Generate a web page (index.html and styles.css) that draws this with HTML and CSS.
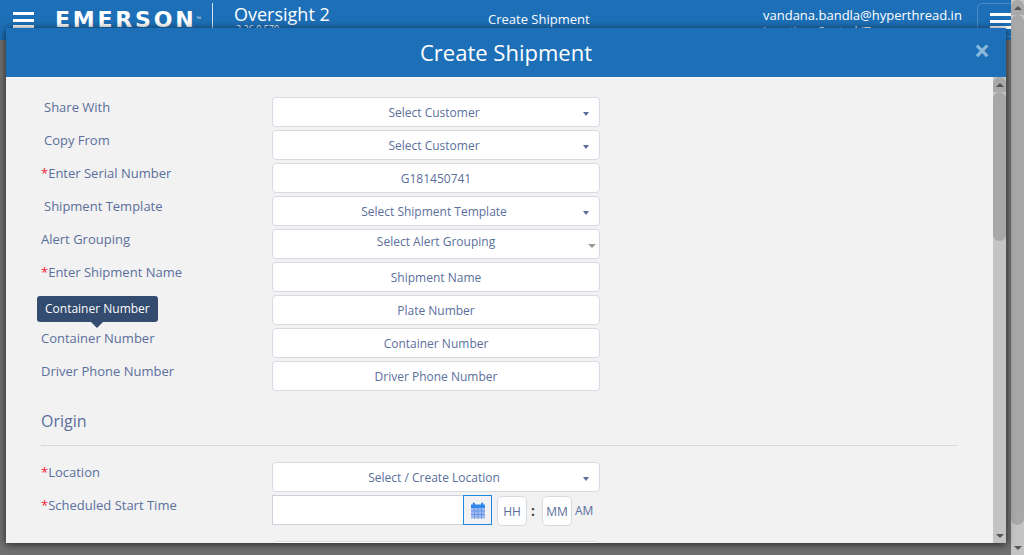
FILE: index.html
```html
<!DOCTYPE html>
<html lang="en">
<head>
  <meta charset="UTF-8">
  <title>Create Shipment</title>
  <link rel="stylesheet" href="styles.css">
</head>
<body>

  <header class="topbar">
    <div class="burger"><span></span><span></span><span></span></div>
    <div class="logo">EMERSON<sup>TM</sup></div>
    <div class="app-name">
      <div class="app-title">Oversight 2</div>
      <div class="app-version">2.26.0.570</div>
    </div>
    <div class="page-title">Create Shipment</div>
    <div class="user">
      <div class="user-mail">vandana.bandla@hyperthread.in</div>
      <div class="user-role">Location: Central IT</div>
    </div>
    <div class="burger-box"><div class="burger"><span></span><span></span><span></span></div></div>
  </header>

  <div class="backdrop"></div>

  <div class="page-scroll">
    <div class="sb-btn sb-up"></div>
    <div class="sb-track"><div class="sb-thumb page-thumb"></div></div>
    <div class="sb-btn sb-down"></div>
  </div>

  <div class="modal">
    <div class="modal-head">
      <h1>Create Shipment</h1>
      <span class="close">&times;</span>
    </div>
    <div class="modal-body">
      <form class="form">
        <div class="row">
          <label class="indent">Share With</label>
          <div class="field select">Select Customer</div>
        </div>
        <div class="row">
          <label class="indent">Copy From</label>
          <div class="field select">Select Customer</div>
        </div>
        <div class="row">
          <label><b>*</b>Enter Serial Number</label>
          <input class="field" type="text" value="G181450741">
        </div>
        <div class="row">
          <label class="indent">Shipment Template</label>
          <div class="field select">Select Shipment Template</div>
        </div>
        <div class="row">
          <label>Alert Grouping</label>
          <div class="field select alt">Select Alert Grouping</div>
        </div>
        <div class="row">
          <label><b>*</b>Enter Shipment Name</label>
          <input class="field" type="text" placeholder="Shipment Name">
        </div>
        <div class="row">
          <label>Plate Number</label>
          <input class="field" type="text" placeholder="Plate Number">
        </div>
        <div class="row">
          <label>Container Number</label>
          <input class="field" type="text" placeholder="Container Number">
        </div>
        <div class="row">
          <label>Driver Phone Number</label>
          <input class="field" type="text" placeholder="Driver Phone Number">
        </div>

        <h2 class="section">Origin</h2>

        <div class="row">
          <label><b>*</b>Location</label>
          <div class="field select">Select / Create Location</div>
        </div>
        <div class="row row-time">
          <label><b>*</b>Scheduled Start Time</label>
          <div class="datetime">
            <input class="date" type="text">
            <div class="cal-btn">
              <svg width="16" height="17" viewBox="0 0 16 17">
                <path d="M1 3h14v13.5H1z" fill="#a3b9ee"/>
                <path d="M1 2.5h14v3.5H1z" fill="#2f86ec"/>
                <rect x="2.8" y="0.5" width="2.2" height="4" rx="1.1" fill="#2f86ec"/>
                <rect x="11" y="0.5" width="2.2" height="4" rx="1.1" fill="#2f86ec"/>
                <path d="M1 9h14M1 12.5h14M4.5 6v10.5M8 6v10.5M11.5 6v10.5" stroke="#4d8ee8" stroke-width="0.7"/>
              </svg>
            </div>
            <input class="time" type="text" placeholder="HH">
            <span class="colon">:</span>
            <input class="time" type="text" placeholder="MM">
            <span class="ampm">AM</span>
          </div>
        </div>
        <div class="row row-next">
          <label></label>
          <div class="field"></div>
        </div>
      </form>

      <div class="tooltip">Container Number</div>

      <div class="modal-scroll">
        <div class="sb-btn sb-up"></div>
        <div class="sb-track"><div class="sb-thumb modal-thumb"></div></div>
        <div class="sb-btn sb-down"></div>
      </div>
    </div>
  </div>

</body>
</html>
```

FILE: styles.css
```css
* {
  box-sizing: border-box;
}
html, body {
  height: 100%;
}
body {
  margin: 0;
  overflow: hidden;
  display: flex;
  flex-direction: column;
  font-family: "Open Sans", sans-serif;
  font-size: 12px;
  color: #5b6f9c;
  background: #707070;
}

/* top bar, mostly hidden by the dialog */
.topbar {
  height: 40px;
  flex: none;
  display: flex;
  align-items: flex-start;
  background: #1d70b8;
  color: #fff;
  overflow: hidden;
}
.burger {
  width: 21px;
  display: flex;
  flex-direction: column;
  gap: 3.5px;
  flex: none;
}
.burger span {
  height: 3px;
  background: #fff;
}
.topbar > .burger {
  margin: 12px 0 0 13px;
}
.logo {
  margin: 3px 0 0 21px;
  width: 158px;
  height: 25px;
  border-right: 1px solid #cfe0f0;
  font-family: "DejaVu Sans", sans-serif;
  font-size: 22px;
  font-weight: 700;
  line-height: 30px;
  letter-spacing: 2.8px;
  white-space: nowrap;
}
.logo sup {
  font-size: 3px;
  font-weight: 400;
  letter-spacing: 0;
}
.app-name {
  margin: 3px 0 0 21px;
  width: 180px;
}
.app-title {
  font-size: 18px;
  line-height: 22px;
}
.app-version {
  font-size: 9px;
  line-height: 10px;
  margin-top: -1px;
  padding-left: 2px;
}
.page-title {
  margin-top: 10px;
  width: 109px;
  margin-left: 74px;
  font-size: 13px;
  line-height: 18px;
  white-space: nowrap;
}
.user {
  margin: 6px 0 0 166px;
  width: 214px;
  white-space: nowrap;
}
.user-mail {
  font-size: 13px;
  line-height: 18px;
}
.user-role {
  font-size: 12px;
  line-height: 16px;
}
.burger-box {
  width: 46px;
  height: 34px;
  margin-top: 3px;
  padding: 9px 0 0 12px;
  border: 1px solid #4a8cc6;
  border-radius: 5px;
  flex: none;
}
.backdrop {
  flex: 1;
  background: #707070;
}

/* scrollbars */
.page-scroll, .modal-scroll {
  position: absolute;
  top: 0;
  right: 0;
  bottom: 0;
  width: 13px;
  display: flex;
  flex-direction: column;
  background: #c4c4c4;
}
.sb-btn {
  height: 15px;
  flex: none;
  display: flex;
  justify-content: center;
  align-items: center;
  background: #a8a8a8;
}
.sb-up {
  border-radius: 7px 7px 0 0;
}
.sb-down {
  border-radius: 0 0 7px 7px;
  background: #c4c4c4;
}
.sb-btn::after {
  content: "";
  border-left: 4px solid transparent;
  border-right: 4px solid transparent;
}
.sb-up::after {
  border-bottom: 4px solid #555;
}
.sb-down::after {
  border-top: 4px solid #555;
}
.sb-track {
  flex: 1;
  background: #c4c4c4;
}
.sb-thumb {
  background: #a8a8a8;
  border-radius: 7px;
}
.page-thumb {
  height: 510px;
}
.modal-thumb {
  height: 149px;
}

/* dialog */
.modal {
  position: absolute;
  left: 6px;
  top: 28px;
  width: 1000px;
  height: 515px;
  display: flex;
  flex-direction: column;
  background: #f2f2f2;
  box-shadow: 0 1px 8px rgba(0, 0, 0, 0.7);
}
.modal-head {
  height: 49px;
  flex: none;
  display: flex;
  align-items: center;
  justify-content: center;
  position: relative;
  padding-bottom: 2px;
  background: #1d70b8;
  color: #fff;
}
.modal-head h1 {
  margin: 0;
  font-size: 22px;
  font-weight: 400;
}
.close {
  position: absolute;
  right: 16px;
  top: 5px;
  font-size: 28px;
  font-weight: 700;
  line-height: 34px;
  color: #8db8de;
}
.modal-body {
  flex: 1;
  position: relative;
  overflow: hidden;
}
.form {
  padding: 20px 48px 0 35px;
  display: flex;
  flex-direction: column;
  gap: 3px;
}
.row {
  display: flex;
  align-items: flex-start;
  height: 30px;
  flex: none;
}
.row label {
  width: 231px;
  flex: none;
  font-size: 13px;
  line-height: 20px;
}
.row label.indent {
  padding-left: 3px;
}
.row label b {
  color: #f01c2c;
  font-weight: 400;
}
.field {
  width: 328px;
  height: 30px;
  background: #fff;
  border: 1px solid #d6dae3;
  border-radius: 4px;
  font-family: inherit;
  font-size: 12px;
  color: #5b6f9c;
  text-align: center;
  outline: none;
}
.field::placeholder, .time::placeholder {
  color: #5b6f9c;
  opacity: 1;
}
.select {
  position: relative;
  padding-right: 4px;
  line-height: 29px;
}
.select::after {
  content: "";
  position: absolute;
  right: 10px;
  top: 14px;
  border-left: 3.5px solid transparent;
  border-right: 3.5px solid transparent;
  border-top: 4px solid #5b6f9c;
}
.select.alt {
  padding-right: 0;
  line-height: 23px;
}
.select.alt::after {
  right: 3px;
  top: 14px;
  border-left-width: 4px;
  border-right-width: 4px;
  border-top: 4px solid #999;
}
.section {
  margin: 15px 0 13px;
  padding-bottom: 12px;
  border-bottom: 1px solid #d9d9d9;
  font-size: 16px;
  font-weight: 400;
  line-height: 24px;
}
.row-next {
  margin-top: 13px;
}
.datetime {
  display: flex;
  align-items: flex-start;
}
.date {
  width: 191px;
  height: 30px;
  background: #fff;
  border: 1px solid #ccd0da;
  border-right: none;
  outline: none;
}
.cal-btn {
  width: 29px;
  height: 30px;
  display: flex;
  align-items: center;
  justify-content: center;
  background: #f2f2f2;
  border: 1px solid #1e88e5;
}
.time {
  width: 30px;
  height: 30px;
  margin: 1px 0 0 5px;
  padding: 0;
  background: #fff;
  border: 1px solid #d6dae3;
  border-radius: 5px;
  font-family: inherit;
  font-size: 12px;
  color: #5b6f9c;
  text-align: center;
  outline: none;
}
.colon {
  width: 11px;
  margin-left: 4px;
  font-size: 14px;
  font-weight: 700;
  line-height: 32px;
  color: #444;
}
.colon + .time {
  margin-left: 0;
}
.ampm {
  margin-left: 3px;
  font-size: 12px;
  line-height: 32px;
}

.tooltip {
  position: absolute;
  left: 31px;
  top: 219px;
  height: 26px;
  padding: 0 8px;
  background: #2a4469;
  opacity: 0.95;
  border-radius: 3px;
  color: #fff;
  font-size: 12px;
  line-height: 25px;
  white-space: nowrap;
}
.tooltip::after {
  content: "";
  position: absolute;
  left: 50%;
  bottom: -6px;
  margin-left: -6px;
  border-left: 6px solid transparent;
  border-right: 6px solid transparent;
  border-top: 6px solid #2a4469;
}
```
